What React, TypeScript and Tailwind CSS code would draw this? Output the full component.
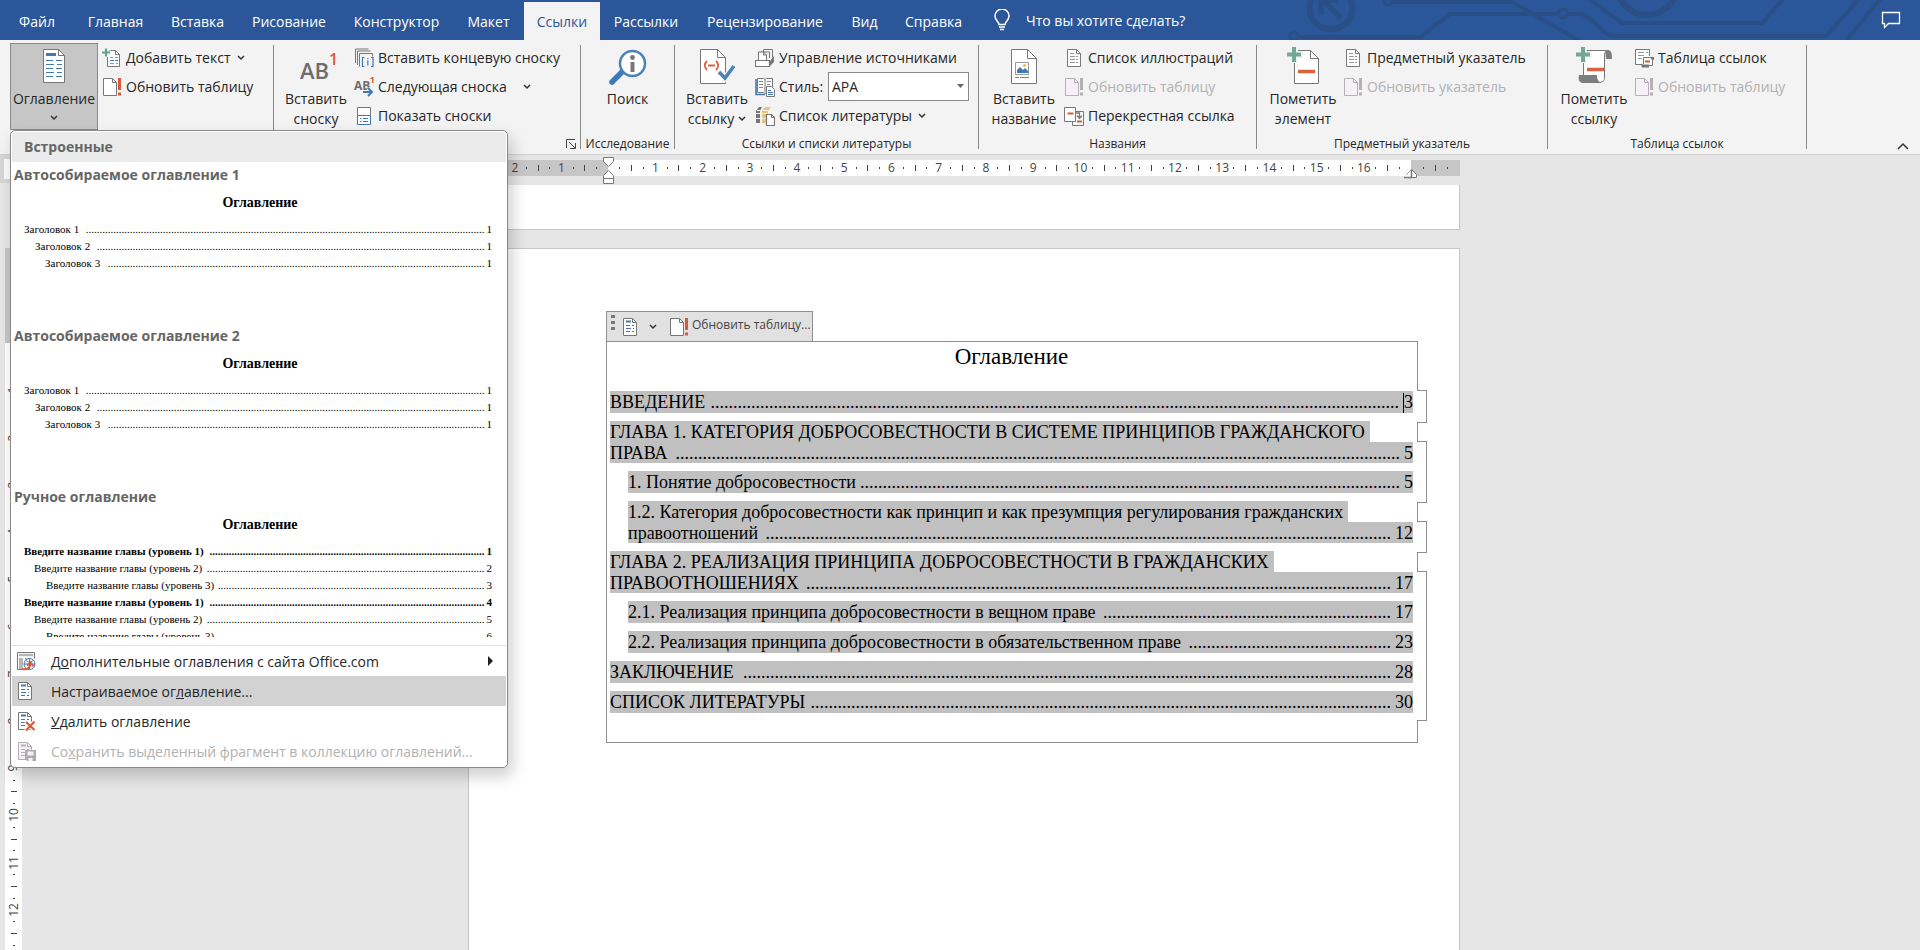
import type { ReactNode } from "react";

const tabs = [
  { label: "Файл", width: "w-[74px]" },
  { label: "Главная", width: "w-[83px]" },
  { label: "Вставка", width: "w-[81px]" },
  { label: "Рисование", width: "w-[102px]" },
  { label: "Конструктор", width: "w-[113px]" },
  { label: "Макет", width: "w-[71px]" },
  { label: "Ссылки", width: "w-[76px]", active: true },
  { label: "Рассылки", width: "w-[92px]" },
  { label: "Рецензирование", width: "w-[146px]" },
  { label: "Вид", width: "w-[53px]" },
  { label: "Справка", width: "w-[85px]" },
];

// dots: length of the leader between the heading and its page number
const tocEntries = [
  { text: "ВВЕДЕНИЕ", page: "3", dots: 153, caret: true },
  {
    first: "ГЛАВА 1. КАТЕГОРИЯ ДОБРОСОВЕСТНОСТИ В СИСТЕМЕ ПРИНЦИПОВ ГРАЖДАНСКОГО",
    text: "ПРАВА",
    page: "5",
    dots: 161,
  },
  { text: "1. Понятие добросовестности", page: "5", dots: 120, nested: true },
  {
    first: "1.2. Категория добросовестности как принцип и как презумпция регулирования гражданских",
    text: "правоотношений",
    page: "12",
    dots: 139,
    nested: true,
  },
  {
    first: "ГЛАВА 2. РЕАЛИЗАЦИЯ ПРИНЦИПА ДОБРОСОВЕСТНОСТИ В ГРАЖДАНСКИХ",
    text: "ПРАВООТНОШЕНИЯХ",
    page: "17",
    dots: 130,
  },
  { text: "2.1. Реализация принципа добросовестности в вещном праве", page: "17", dots: 64, nested: true },
  { text: "2.2. Реализация принципа добросовестности в обязательственном праве", page: "23", dots: 45, nested: true },
  { text: "ЗАКЛЮЧЕНИЕ", page: "28", dots: 144 },
  { text: "СПИСОК ЛИТЕРАТУРЫ", page: "30", dots: 129 },
];

const autoRows = [
  { text: "Заголовок 1", page: "1", dots: 145, indent: "pl-[10px]" },
  { text: "Заголовок 2", page: "1", dots: 141, indent: "pl-[21px]" },
  { text: "Заголовок 3", page: "1", dots: 137, indent: "pl-[31px]" },
];

const manualRows = [
  { text: "Введите название главы (уровень 1)", page: "1", dots: 100, indent: "pl-[10px]", bold: true },
  { text: "Введите название главы (уровень 2)", page: "2", dots: 101, indent: "pl-[20px]" },
  { text: "Введите название главы (уровень 3)", page: "3", dots: 97, indent: "pl-[32px]" },
  { text: "Введите название главы (уровень 1)", page: "4", dots: 100, indent: "pl-[10px]", bold: true },
  { text: "Введите название главы (уровень 2)", page: "5", dots: 101, indent: "pl-[20px]" },
  { text: "Введите название главы (уровень 3)", page: "6", dots: 0, indent: "pl-[32px]" },
];

/* ---------- icons ---------- */

const Chevron = ({ className = "" }: { className?: string }) => (
  <svg className={"shrink-0 " + className} width="8" height="6" viewBox="0 0 8 6" fill="none" stroke="#333" strokeWidth="1.5">
    <path d="M1 1l3 3 3-3" />
  </svg>
);

const Small = ({ children }: { children: ReactNode }) => (
  <svg className="shrink-0" width="20" height="20" viewBox="0 0 20 20" fill="none">
    {children}
  </svg>
);

const TocBigIcon = () => (
  <svg width="24" height="36" viewBox="0 0 24 36" fill="none">
    <path d="M1.5 1.5h15l6 6v27h-21z" fill="#fff" stroke="#777" />
    <path d="M16.5 1.5v6h6" stroke="#777" />
    <path d="M4 6.5h10" stroke="#3f78b5" strokeWidth="3" />
    <path d="M4 12.5h7M14 12.5h6M4 16.5h8M15 16.5h5M4 20.5h7M14 20.5h6M4 24.5h8M15 24.5h5M4 28.5h7M14 28.5h6" stroke="#3f78b5" />
  </svg>
);

const AddTextIcon = () => (
  <Small>
    <path d="M5.5 2.5h8l4 4v12h-12z" fill="#fff" stroke="#777" />
    <path d="M13.5 2.5v4h4" stroke="#777" />
    <path d="M0 4.5h9M4.5 0v9" stroke="#f3f3f3" strokeWidth="4" />
    <path d="M0 4.5h8M4 .5v8" stroke="#5fa58c" strokeWidth="2.2" />
    <path d="M8 9.5h3M13 9.5h3M8 15.5h4M14 15.5h2" stroke="#999" />
    <path d="M8 12.5h4M13 12.5h3" stroke="#3f78b5" />
  </Small>
);

const UpdateIcon = ({ muted = false }: { muted?: boolean }) => (
  <Small>
    <path d="M1.5 1.5h9l4 4v13h-13z" fill={muted ? "#f6f0f7" : "#fff"} stroke={muted ? "#b5b0b5" : "#777"} />
    <path d="M10.5 1.5v4h4" stroke={muted ? "#b5b0b5" : "#777"} />
    <path d="M17.5 1v12M17.5 15.5v3" stroke={muted ? "#b5b0b5" : "#d85a3a"} strokeWidth="3" />
  </Small>
);

const FootnoteBigIcon = () => (
  <span className="flex items-start pl-[6px] text-[#6d6d6d]">
    <span className="pt-2 text-[22px] font-semibold leading-[30px]">AB</span>
    <span className="pt-[2px] text-[16px] font-semibold leading-5 text-[#d85a3a]">1</span>
  </span>
);

const EndnoteIcon = () => (
  <Small>
    <path d="M1.5 15v-14h13M3.5 17v-14h13M5.5 18.5v-13h13v3" stroke="#777" />
    <path d="M10.5 9.5h-2v9h2M17 9.5h2v9h-2M13.8 12.5v5M13.8 10v1.300" stroke="#3f78b5" strokeWidth="1.2" />
  </Small>
);

const NextFootnoteIcon = () => (
  <span className="relative flex h-5 w-5 shrink-0 text-[#6d6d6d]">
    <span className="text-[12px] font-bold leading-[18px]">AB</span>
    <span className="absolute -right-[1px] -top-[3px] text-[9px] font-bold leading-3 text-[#d85a3a]">1</span>
    <svg className="absolute bottom-0 right-0" width="12" height="10" viewBox="0 0 12 10" fill="none">
      <path d="M1 5h9M6 1l4 4-4 4" stroke="#f3f3f3" strokeWidth="4" />
      <path d="M1 5h9M6 1l4 4-4 4" stroke="#3f78b5" strokeWidth="2" />
    </svg>
  </span>
);

const ShowNotesIcon = () => (
  <Small>
    <path d="M3.5 9.5v-8h13v8" fill="#fff" stroke="#777" />
    <path d="M3.5 9.5h13v9h-13z" fill="#fff" stroke="#3f78b5" />
    <path d="M6 12.5h1.5M9 12.5h5M6 15.5h1.5M9 15.5h5" stroke="#3f78b5" />
  </Small>
);

const SearchIcon = () => (
  <svg width="40" height="40" viewBox="0 0 40 40" fill="none">
    <path d="M15 24L4 35" stroke="#3f78b5" strokeWidth="5.5" strokeLinecap="round" />
    <circle cx="24.5" cy="16.5" r="12.5" fill="#fff" stroke="#4a80bb" strokeWidth="2.5" />
    <path d="M24.5 15v10" stroke="#777" strokeWidth="4" />
    <circle cx="24.5" cy="10.5" r="2.4" fill="#777" />
  </svg>
);

const CitationIcon = () => (
  <svg width="36" height="38" viewBox="0 0 36 38" fill="none">
    <path d="M1.5 2.5h17l8 8v26h-25z" fill="#fff" stroke="#777" />
    <path d="M18.5 2.5v8h8" stroke="#777" />
    <path d="M8 14c-3 3-3 6 0 9M17 14c3 3 3 6 0 9M9 18.5h7" stroke="#d9623f" strokeWidth="1.8" />
    <path d="M20 25l6 6 9-12" stroke="#f3f3f3" strokeWidth="6" />
    <path d="M20 25l6 6 9-12" stroke="#4a80bb" strokeWidth="3.5" />
  </svg>
);

const SourcesIcon = () => (
  <Small>
    <path d="M5.5 8v-4h9v6M8.5 4v-2.500h9v8" stroke="#777" />
    <path d="M3.5 12v-8h5l3 3v5" fill="#fff" stroke="#777" />
    <path d="M8.5 4v3h3" stroke="#777" />
    <path d="M.5 12.5h14v6h-14z" fill="#fff" stroke="#777" strokeWidth="1.2" />
    <path d="M15 13l4-5v6l-4 4z" fill="#777" />
  </Small>
);

const StyleIcon = () => (
  <Small>
    <path d="M1 2v15.500h9" stroke="#3f78b5" strokeWidth="1.6" />
    <path d="M2.5 1.5h6l1.5 1 1.5-1h6v14h-6l-1.5 1-1.5-1h-6zM10 3v12" fill="#fff" stroke="#777" />
    <path d="M4 4.5h4M4 7.5h4M4 10.5h4M12 4.5h4M12 7.5h3" stroke="#888" />
    <path d="M11.5 9.5h5l3 3v7h-8z" fill="#fff" stroke="#777" />
    <path d="M13 13.5h3M13 15.5h5M13 17.5h5" stroke="#3f78b5" />
  </Small>
);

const BibliographyIcon = () => (
  <Small>
    <path d="M1 5l3-4h3l-2 4v12H1z" fill="#777" />
    <path d="M1 7.5h4M1 12.5h4M2 4.5h4" stroke="#f3f3f3" />
    <path d="M7 5l3-4h6l-3 4v12H7z" fill="#ecc478" />
    <path d="M7 7.5h5M7 12.5h5M8 4.500h5" stroke="#f3f3f3" />
    <path d="M11.5 8.5h5l3 3v8h-8z" fill="#fff" stroke="#777" strokeWidth="1.2" />
    <path d="M16.5 8.5v3h3" stroke="#777" />
  </Small>
);

const CaptionIcon = () => (
  <svg width="28" height="38" viewBox="0 0 28 38" fill="none">
    <path d="M1.5 2.5h16l9 9v25h-25z" fill="#fff" stroke="#777" />
    <path d="M17.5 2.5v9h9" stroke="#777" />
    <path d="M5.5 15.5h13v12h-13z" fill="#fff" stroke="#999" />
    <path d="M7 26v-3l3-3 3 3 2-2 3 3v2z" fill="#3f78b5" />
    <circle cx="14.5" cy="18.5" r="1.5" fill="#ecb85a" />
    <path d="M5 30.5h4M10 30.5h9" stroke="#d9623f" strokeWidth="1.2" />
  </svg>
);

const ListDocIcon = () => (
  <Small>
    <path d="M3.5 1.5h9l4 4v13h-13z" fill="#fff" stroke="#777" />
    <path d="M12.5 1.5v4h4" stroke="#777" />
    <path d="M6 5.5h4M6 8.5h8M6 11.5h8M6 14.5h8" stroke="#999" strokeDasharray="5 1 2 0" />
  </Small>
);

const CrossRefIcon = () => (
  <Small>
    <path d="M8.5 5.5h11v14h-11z" fill="#fff" stroke="#777" />
    <path d="M.5 1.5h11v14h-11z" fill="#fff" stroke="#777" />
    <path d="M3.5 7.5h6M13 15.5h5" stroke="#d85a3a" strokeWidth="2" />
    <path d="M12 7h3.5v5M13 9.5l2.5 3 2.500-3" stroke="#777" strokeWidth="1.3" />
  </Small>
);

const MarkEntryIcon = () => (
  <svg width="34" height="38" viewBox="0 0 34 38" fill="none">
    <path d="M8.5 3.5h16l8 8v25h-24z" fill="#fff" stroke="#777" />
    <path d="M24.5 3.5v8h8" stroke="#777" />
    <path d="M0 7.5h17M8.5 0v16" stroke="#f3f3f3" strokeWidth="7" />
    <path d="M1 7.5h14M8 0v15" stroke="#74a896" strokeWidth="4" />
    <path d="M12 24.5h17" stroke="#d9623f" strokeWidth="3.5" />
  </svg>
);

const MarkCitationIcon = () => (
  <svg width="38" height="38" viewBox="0 0 38 38" fill="none">
    <path d="M8.5 30v-26.500h24c-2 1-3 2-3 4v24c0 3-4 4-6 4h-10" fill="#fff" stroke="#777" />
    <path d="M32 3c4 0 5 2 5 9h-6c0-5-2-8 1-9zM4 28h18c0 4 1 7 5 8H8c-4 0-5-4-4-8z" fill="#7d7d7d" />
    <path d="M0 7.5h17M8.5 0v16" stroke="#f3f3f3" strokeWidth="7" />
    <path d="M1 7.5h14M8 0v15" stroke="#74a896" strokeWidth="4" />
    <path d="M12 22.5h17" stroke="#d9623f" strokeWidth="3.5" />
  </svg>
);

const AuthoritiesIcon = () => (
  <Small>
    <path d="M15.5 8v-6.500h-14v15h7" fill="#fff" stroke="#777" />
    <path d="M4 4.5h6M4 7.5h6M4 10.5h4M12 4.5h2" stroke="#999" />
    <path d="M9.5 16v-6.500h9v8h-7" fill="#fff" stroke="#777" />
    <path d="M11 13.5h5" stroke="#d85a3a" strokeWidth="2" />
    <path d="M7 16.5h8v3H8zM16 9h4v3h-2z" fill="#777" />
  </Small>
);

const DocLinesIcon = ({ muted = false, children }: { muted?: boolean; children?: ReactNode }) => (
  <Small>
    <path d="M2.5 1.5h9l4 4v13h-13z" fill={muted ? "#f6f0f7" : "#fff"} stroke={muted ? "#b5b0b5" : "#777"} />
    <path d="M11.5 1.5v4h4" stroke={muted ? "#b5b0b5" : "#777"} />
    <path d="M5 4.5h5" stroke={muted ? "#b5b0b5" : "#3f78b5"} strokeWidth="2" />
    <path d="M5 8.5h4M11 8.5h2M5 11.5h5M12 11.5h1M5 14.5h4M11 14.5h2" stroke={muted ? "#b5b0b5" : "#3f78b5"} />
    {children}
  </Small>
);

const OfficeComIcon = () => (
  <Small>
    <path d="M1.5 18v-16.500h17v6" fill="#fff" stroke="#777" />
    <path d="M1 18.500h6" stroke="#777" />
    <path d="M3 4h14" stroke="#b5b5b5" strokeWidth="2.5" />
    <path d="M3 7h4v11h-4zM9 7h5v3h-5z" fill="#b5b5b5" />
    <circle cx="13.5" cy="13" r="5.5" fill="#fff" stroke="#3f78b5" />
    <path d="M8 13h11M13.5 7.5v11M10 9.5c2 2 5 2 7 0" stroke="#3f78b5" />
    <path d="M6 18c5 1 8-1 8.5-5M11 14.5l3.500-3 3 4" stroke="#d85a3a" strokeWidth="2" />
  </Small>
);

/* ---------- ribbon ---------- */

const BigButton = ({ icon, lines, chevron = false }: { icon: ReactNode; lines: string[]; chevron?: boolean }) => (
  <button className="flex w-[72px] shrink-0 flex-col items-center whitespace-nowrap">
    <span className="flex h-[46px] items-start justify-center pt-1">{icon}</span>
    {lines.map((line, i) => (
      <span key={line} className="flex items-center gap-1 leading-5">
        {line}
        {chevron && i === lines.length - 1 && <Chevron />}
      </span>
    ))}
  </button>
);

const SmallButton = ({
  icon,
  label,
  chevron,
  disabled = false,
}: {
  icon: ReactNode;
  label: string;
  chevron?: "near" | "far";
  disabled?: boolean;
}) => (
  <button
    disabled={disabled}
    className={"flex h-[29px] items-center gap-1 whitespace-nowrap " + (disabled ? "text-[#b1b1b1]" : "text-[#262626]")}
  >
    {icon}
    <span>{label}</span>
    {chevron && <Chevron className={chevron === "far" ? "ml-3" : "ml-[2px]"} />}
  </button>
);

const Group = ({
  title,
  width,
  children,
  launcher = false,
}: {
  title: string;
  width: string;
  children: ReactNode;
  launcher?: boolean;
}) => (
  <section className={"flex shrink-0 " + width}>
    <div className="flex min-w-0 flex-1 flex-col">
      <div className="flex h-[95px] pt-[3px]">{children}</div>
      <div className="flex h-[18px] items-center justify-center whitespace-nowrap text-[12px] text-[#262626]">
        {title}
        {launcher && (
          <button aria-label="Параметры сносок" className="ml-auto mr-[3px]">
            <svg width="12" height="12" viewBox="0 0 12 12" fill="none" stroke="#444">
              <path d="M1.5 10v-8.500h8.500M4 4l6 6M10.5 5v5.500h-5.500" />
            </svg>
          </button>
        )}
      </div>
    </div>
    <div className="mb-[5px] mt-[5px] w-px bg-[#8a8a8a]" />
  </section>
);

const Ribbon = () => (
  <div className="flex h-[115px] shrink-0 border-b border-[#d2d2d2] bg-[#f3f3f3] text-[14px] text-[#262626]">
    <Group title="" width="w-[274px]">
      <button className="ml-[10px] flex h-[87px] w-[88px] shrink-0 flex-col items-center border border-[#8a8a8a] bg-[#c6c6c6]">
        <span className="flex h-[45px] items-start pt-1">
          <TocBigIcon />
        </span>
        <span className="leading-5">Оглавление</span>
        <Chevron className="mt-[6px]" />
      </button>
      <div className="ml-1">
        <SmallButton icon={<AddTextIcon />} label="Добавить текст" chevron="near" />
        <SmallButton icon={<UpdateIcon />} label="Обновить таблицу" />
      </div>
    </Group>
    <Group title="" width="w-[307px]" launcher>
      <div className="flex gap-[2px] pl-[6px]">
        <BigButton icon={<FootnoteBigIcon />} lines={["Вставить", "сноску"]} />
        <div>
          <SmallButton icon={<EndnoteIcon />} label="Вставить концевую сноску" />
          <SmallButton icon={<NextFootnoteIcon />} label="Следующая сноска" chevron="far" />
          <SmallButton icon={<ShowNotesIcon />} label="Показать сноски" />
        </div>
      </div>
    </Group>
    <Group title="Исследование" width="w-[94px]">
      <div className="flex flex-1 justify-center">
        <BigButton icon={<SearchIcon />} lines={["Поиск"]} />
      </div>
    </Group>
    <Group title="Ссылки и списки литературы" width="w-[304px]">
      <div className="flex gap-[2px] pl-[6px]">
        <BigButton icon={<CitationIcon />} lines={["Вставить", "ссылку"]} chevron />
        <div>
          <SmallButton icon={<SourcesIcon />} label="Управление источниками" />
          <div className="flex h-[29px] items-center gap-1">
            <StyleIcon />
            <label htmlFor="style" className="w-[45px]">
              Стиль:
            </label>
            <span className="relative">
              <select id="style" className="block h-[29px] w-[141px] appearance-none border border-[#8a8a8a] bg-white pl-[3px]">
                <option>APA</option>
              </select>
              <svg className="pointer-events-none absolute right-[5px] top-3" width="7" height="4" viewBox="0 0 7 4">
                <path d="M0 0h7l-3.500 4z" fill="#666" />
              </svg>
            </span>
          </div>
          <SmallButton icon={<BibliographyIcon />} label="Список литературы" chevron="near" />
        </div>
      </div>
    </Group>
    <Group title="Названия" width="w-[278px]">
      <div className="flex gap-1 pl-[9px]">
        <BigButton icon={<CaptionIcon />} lines={["Вставить", "название"]} />
        <div>
          <SmallButton icon={<ListDocIcon />} label="Список иллюстраций" />
          <SmallButton icon={<UpdateIcon muted />} label="Обновить таблицу" disabled />
          <SmallButton icon={<CrossRefIcon />} label="Перекрестная ссылка" />
        </div>
      </div>
    </Group>
    <Group title="Предметный указатель" width="w-[291px]">
      <div className="flex gap-1 pl-[10px]">
        <BigButton icon={<MarkEntryIcon />} lines={["Пометить", "элемент"]} />
        <div>
          <SmallButton icon={<ListDocIcon />} label="Предметный указатель" />
          <SmallButton icon={<UpdateIcon muted />} label="Обновить указатель" disabled />
        </div>
      </div>
    </Group>
    <Group title="Таблица ссылок" width="w-[259px]">
      <div className="flex gap-1 pl-[10px]">
        <BigButton icon={<MarkCitationIcon />} lines={["Пометить", "ссылку"]} />
        <div>
          <SmallButton icon={<AuthoritiesIcon />} label="Таблица ссылок" />
          <SmallButton icon={<UpdateIcon muted />} label="Обновить таблицу" disabled />
        </div>
      </div>
    </Group>
    <button aria-label="Свернуть ленту" className="mb-1 ml-auto mr-[11px] self-end">
      <svg width="12" height="8" viewBox="0 0 12 8" fill="none" stroke="#333" strokeWidth="1.5">
        <path d="M1 7l5-5 5 5" />
      </svg>
    </button>
  </div>
);

const HeaderArt = () => (
  <svg className="absolute right-0 top-0" width="640" height="40" viewBox="1280 0 640 40" fill="none" stroke="#2a4f86" strokeWidth="4">
    <circle cx="1331" cy="8" r="21.5" strokeWidth="6" />
    <path d="M1341 18l-18-18M1321 14V0h16" strokeWidth="5.5" />
    <circle cx="1388" cy="1" r="4" strokeWidth="3" />
    <path d="M1393 2h119l70 40" />
    <circle cx="1294" cy="36" r="4" strokeWidth="3" />
    <path d="M1299 37h121l30-23h108" />
    <circle cx="1563" cy="13.5" r="4.5" strokeWidth="3" />
    <path d="M1568 14h12c9 0 20 16 30 22h216l34-38" />
    <path d="M1588-2l34 25h140l22-25M1845 42l36-44" />
    <circle cx="1647" cy="-15" r="30" strokeWidth="6" />
  </svg>
);

const Header = () => (
  <header className="relative flex h-10 shrink-0 bg-[#2b579a] text-[14px] text-white">
    <HeaderArt />
    <nav className="flex pt-[2px]">
      {tabs.map((tab) => (
        <button
          key={tab.label}
          className={
            "shrink-0 whitespace-nowrap text-center " +
            tab.width +
            (tab.active ? " bg-[#f3f3f3] text-[#2b579a]" : "")
          }
        >
          {tab.label}
        </button>
      ))}
    </nav>
    <button className="relative ml-[18px] flex items-center gap-4 whitespace-nowrap">
      <svg width="16" height="22" viewBox="0 0 16 22" fill="none" stroke="#fff" strokeWidth="1.5">
        <path d="M5 15.5c0-3-4-4-4-8.500a7 7 0 0 1 14 0c0 4.500-4 5.500-4 8.500zM5 18h6M6 20.5h4" />
      </svg>
      Что вы хотите сделать?
    </button>
    <button aria-label="Примечания" className="relative ml-auto mr-[19px]">
      <svg width="20" height="18" viewBox="0 0 20 18" fill="none" stroke="#fff" strokeWidth="1.3">
        <path d="M1.5 1.5h17v11h-11l-4 4v-4h-2z" />
      </svg>
    </button>
  </header>
);

/* ---------- rulers ---------- */

const HorizontalRuler = ({ marks }: { marks: string[] }) => (
  <div className="-mr-[6px] ml-[6px] flex h-full text-[12px] leading-[18px] text-[#444]">
    {marks.map((mark, i) => (
      <div key={i} className="flex min-w-0 flex-1 items-center">
        <span className="flex flex-1 justify-center"><i className="h-[2px] w-px bg-[#444]" /></span>
        <span className="flex flex-1 justify-center"><i className="h-[6px] w-px bg-[#444]" /></span>
        <span className="flex flex-1 justify-center"><i className="h-[2px] w-px bg-[#444]" /></span>
        <span className="flex w-0 flex-1 justify-center">{mark}</span>
      </div>
    ))}
  </div>
);

const VerticalRuler = () => (
  <div className="flex h-[620px] w-[17px] shrink-0 flex-col pt-[6px] text-[12px] text-[#444]">
    {["1", "2", "3", "4", "5", "6", "7", "8", "9", "10", "11", "12", ""].map((mark) => (
      <div key={mark} className="flex min-h-0 flex-1 flex-col items-center">
        <span className="flex flex-1 items-center"><i className="h-px w-[2px] bg-[#444]" /></span>
        <span className="flex flex-1 items-center"><i className="h-px w-[6px] bg-[#444]" /></span>
        <span className="flex flex-1 items-center"><i className="h-px w-[2px] bg-[#444]" /></span>
        <span className="flex h-0 flex-1 items-center"><b className="-rotate-90 font-normal leading-4">{mark}</b></span>
      </div>
    ))}
  </div>
);

/* ---------- document ---------- */

const TocControl = () => (
  <div>
    <div className="flex h-[30px] w-[207px] items-center border border-b-0 border-[#8f8f8f] bg-[#e1e1e1] text-[12px] text-[#444]">
      <span className="ml-1 flex flex-col gap-[3px] self-start pt-[3px]">
        <i className="h-[3px] w-1 bg-[#777]" />
        <i className="h-[3px] w-1 bg-[#777]" />
        <i className="h-[3px] w-1 bg-[#777]" />
      </span>
      <button aria-label="Оглавление" className="ml-[6px] flex items-center gap-2">
        <DocLinesIcon />
        <Chevron />
      </button>
      <button className="ml-3 flex items-center gap-[3px] whitespace-nowrap">
        <UpdateIcon />
        <span className="pb-1">Обновить таблицу...</span>
      </button>
    </div>
    <div className="flex w-[821px]">
      <div className="min-w-0 flex-1 border-y border-l border-[#8f8f8f] pb-[29px] pl-[3px] pr-1 font-['Liberation_Serif','Times_New_Roman',serif] text-[18px] leading-[23px] text-black">
        <h1 className="pb-[21px] pt-px text-center text-[23px] leading-[27px]">Оглавление</h1>
        <ul className="flex flex-col gap-2">
          {tocEntries.map((entry) => (
            <li key={entry.text} className={entry.nested ? "pl-[18px]" : ""}>
              {entry.first && (
                <p className="flex h-[21px]">
                  <span className="whitespace-nowrap bg-[#c0c0c0] pr-[5px]">{entry.first}</span>
                </p>
              )}
              <p className={"flex bg-[#c0c0c0] " + (entry.first ? "h-[21px]" : "h-[22px]")}>
                <span className="whitespace-nowrap">{entry.text}</span>
                <span className="ml-auto mr-1">{".".repeat(entry.dots)}</span>
                {entry.caret && <i className="mt-[2px] w-px bg-black" />}
                <span>{entry.page}</span>
              </p>
            </li>
          ))}
        </ul>
      </div>
      {/* stepped right edge: narrow parts stay on the frame, wide ones follow the selected field */}
      <div className="flex w-[10px] shrink-0 flex-col">
        <div className="h-[49px] border-l border-[#8f8f8f]" />
        <div className="h-[33px] border-y border-r border-[#8f8f8f]" />
        <div className="h-[18px] border-l border-[#8f8f8f]" />
        <div className="h-[62px] border-y border-r border-[#8f8f8f]" />
        <div className="h-[18px] border-l border-[#8f8f8f]" />
        <div className="h-[32px] border-y border-r border-[#8f8f8f]" />
        <div className="h-[18px] border-l border-[#8f8f8f]" />
        <div className="h-[150px] border-y border-r border-[#8f8f8f]" />
        <div className="flex-1 border-l border-[#8f8f8f]" />
      </div>
    </div>
  </div>
);

const Workspace = () => (
  <main className="flex min-h-0 flex-1 overflow-hidden bg-[#e6e6e6]">
    <div className="flex w-[22px] shrink-0 flex-col overflow-hidden">
      <div className="h-7 shrink-0 bg-[#d6d6d6] py-1 pl-1">
        <div className="h-5 bg-[#fafafa]" />
      </div>
      <div className="ml-[5px] mt-[65px] h-[95px] shrink-0 bg-[#c6c6c6]" />
      <div className="ml-[5px] min-h-0 flex-1 overflow-hidden bg-white">
        <VerticalRuler />
      </div>
    </div>
    <div className="flex min-w-0 flex-1 flex-col items-center pr-[14px]">
      <div className="relative mt-[5px] flex h-4 w-[992px] shrink-0">
        <div className="w-[140px] overflow-hidden bg-[#c6c6c6]">
          <HorizontalRuler marks={["2", "1", ""]} />
        </div>
        <div className="min-w-0 flex-1 overflow-hidden bg-white">
          <HorizontalRuler marks={["1", "2", "3", "4", "5", "6", "7", "8", "9", "10", "11", "12", "13", "14", "15", "16", ""]} />
        </div>
        <div className="w-[49px] overflow-hidden bg-[#c6c6c6]">
          <HorizontalRuler marks={[""]} />
        </div>
        <svg className="absolute -top-[3px] left-[135px]" width="12" height="28" viewBox="0 0 12 28" fill="#fff" stroke="#777">
          <path d="M.5.5h10v4l-5 5-5-5zM5.5 13.5l5 5v3h-10v-3zM.5 21.5h10v5h-10z" />
        </svg>
        <svg className="absolute right-[42px] top-[9px]" width="14" height="10" viewBox="0 0 14 10" fill="#fff" stroke="#777">
          <path d="M7.5.5l5 5v3h-10v-3z" />
          <path d="M0 8.5h7.5v-8" strokeWidth="1.5" />
        </svg>
      </div>
      <div className="mt-[9px] h-[45px] w-[992px] shrink-0 border border-t-0 border-[#c6c6c6] bg-white" />
      <div className="mt-[18px] w-[992px] flex-1 border border-b-0 border-[#c6c6c6] bg-white pl-[137px] pt-[62px]">
        <TocControl />
      </div>
    </div>
  </main>
);

/* ---------- drop-down gallery ---------- */

type PreviewRow = { text: string; page: string; dots: number; indent: string; bold?: boolean };

const GalleryItem = ({ title, rows }: { title: string; rows: PreviewRow[] }) => (
  <button className="flex h-[161px] w-full flex-col items-stretch pl-[2px] text-left">
    <span className="text-[14px] font-bold leading-[26px] text-[#666]">{title}</span>
    <span className="pb-[9px] pt-[6px] text-center font-['Liberation_Serif','Times_New_Roman',serif] text-[14px] font-bold leading-[18px] text-black">
      Оглавление
    </span>
    <span className="font-['Liberation_Serif','Times_New_Roman',serif] text-[11px] leading-[17px] text-black">
      {rows.map((row, i) => (
        <span key={i} className={"flex whitespace-nowrap pr-[14px] " + row.indent + (row.bold ? " font-bold" : "")}>
          <span>{row.text}</span>
          <span className="ml-auto mr-[2px]">{".".repeat(row.dots)}</span>
          <span>{row.page}</span>
        </span>
      ))}
    </span>
  </button>
);

const MenuItem = ({
  icon,
  children,
  selected = false,
  disabled = false,
  arrow = false,
}: {
  icon: ReactNode;
  children: ReactNode;
  selected?: boolean;
  disabled?: boolean;
  arrow?: boolean;
}) => (
  <button
    role="menuitem"
    disabled={disabled}
    className={
      "flex h-[30px] w-full items-center gap-[15px] whitespace-nowrap pl-1 pr-3 " +
      (selected ? "bg-[#d2d2d2] " : "") +
      (disabled ? "text-[#b1b1b1]" : "text-[#262626]")
    }
  >
    {icon}
    <span>{children}</span>
    {arrow && (
      <svg className="ml-auto" width="6" height="10" viewBox="0 0 6 10">
        <path d="M0 0l5 5-5 5z" fill="#222" />
      </svg>
    )}
  </button>
);

const TocMenu = () => (
  <div
    role="menu"
    className="absolute left-[10px] top-[130px] w-[498px] rounded-[5px] border border-[#8a8a8a] bg-white p-px text-[14px] shadow-[4px_8px_16px_rgba(0,0,0,0.2)]"
  >
    <div className="h-[30px] rounded-t-[4px] bg-[#ebebeb] pl-3 font-bold leading-[29px] text-[#666]">Встроенные</div>
    <div className="h-[475px] overflow-hidden">
      <GalleryItem title="Автособираемое оглавление 1" rows={autoRows} />
      <GalleryItem title="Автособираемое оглавление 2" rows={autoRows} />
      <GalleryItem title="Ручное оглавление" rows={manualRows} />
    </div>
    <div className="mt-2 border-t border-[#e1e1e1]">
      <MenuItem icon={<OfficeComIcon />} arrow>
        Д<span className="underline">о</span>полнительные оглавления с сайта Office.com
      </MenuItem>
      <MenuItem icon={<DocLinesIcon />} selected>
        Настраиваемое ог<span className="underline">л</span>авление...
      </MenuItem>
      <MenuItem
        icon={
          <DocLinesIcon>
            <path d="M9.5 10.5l9 9M18.5 10.5l-9 9" stroke="#fff" strokeWidth="4" />
            <path d="M10 11l8.5 8M18.5 10.5l-8.500 9" stroke="#d85a3a" strokeWidth="2.2" />
          </DocLinesIcon>
        }
      >
        <span className="underline">У</span>далить оглавление
      </MenuItem>
      <MenuItem
        disabled
        icon={
          <DocLinesIcon muted>
            <path d="M9 9h11v11h-9l-2-2z" fill="#b0abb0" />
            <path d="M11.5 10.5h6v4h-6zM12.5 17h4v3h-4z" fill="#f6f0f7" />
          </DocLinesIcon>
        }
      >
        Со<span className="underline">х</span>ранить выделенный фрагмент в коллекцию оглавлений...
      </MenuItem>
    </div>
  </div>
);

const App = () => {
  return (
    <div className="relative flex h-screen flex-col overflow-hidden font-['Open_Sans','Noto_Sans',sans-serif]">
      <Header />
      <Ribbon />
      <Workspace />
      <TocMenu />
    </div>
  );
};

export default App;
